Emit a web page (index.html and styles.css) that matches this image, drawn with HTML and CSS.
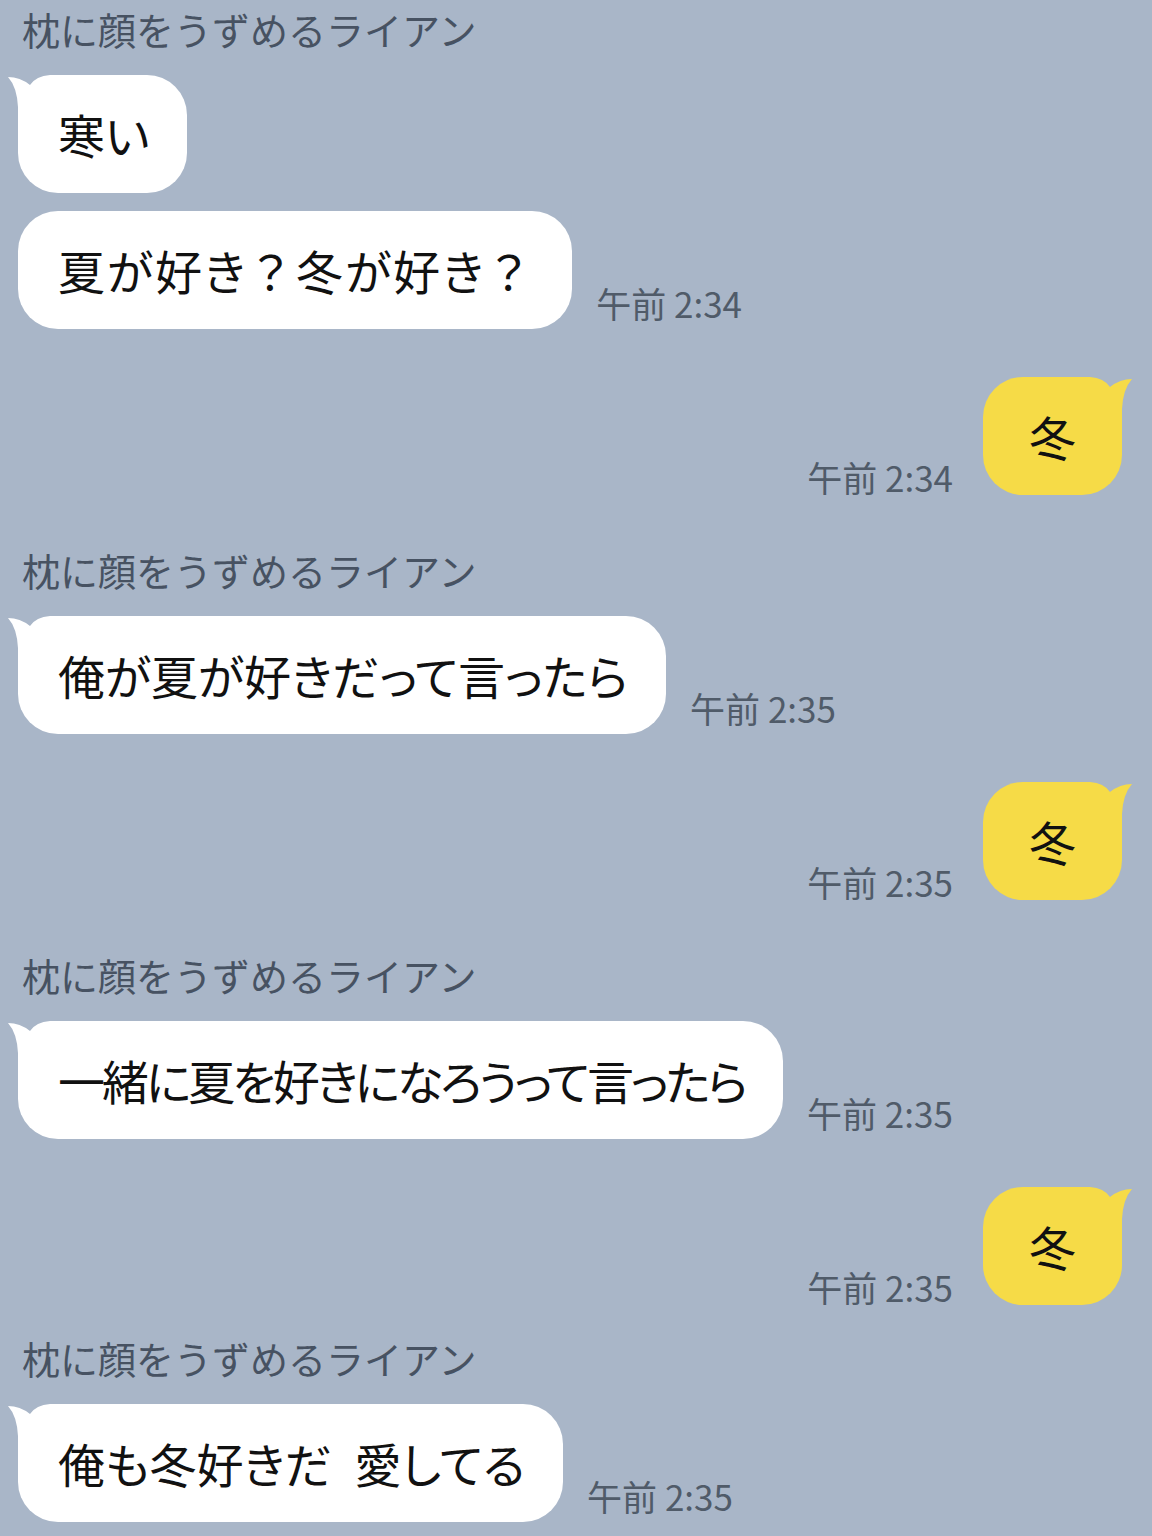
FILE: index.html
```html
<!DOCTYPE html>
<html lang="ja">
<head>
    <meta charset="UTF-8">
    <meta name="viewport" content="width=device-width, initial-scale=1.0">
    <title>トーク</title>
    <link rel="stylesheet" href="styles.css">
</head>
<body>

<div class="chat">
    <div class="name">枕に顔をうずめるライアン</div>
    <div class="row in">
        <div class="bubble white first">
            <svg class="tail" viewBox="0 0 52 52"><path d="M2,2 Q14,2 24,10 Q30,1 44,0 L52,0 L52,52 L12,52 L12,32 Q11,12 2,2 Z"/></svg>
            寒い
        </div>
    </div>
    <div class="row in next">
        <div class="bubble white loose">夏が好き<span class="full">？</span>冬が好き<span class="full">？</span></div>
        <div class="time">午前 2:34</div>
    </div>

    <div class="row out">
        <div class="time">午前 2:34</div>
        <div class="bubble yellow first">
            <svg class="tail" viewBox="0 0 52 52"><path d="M2,2 Q14,2 24,10 Q30,1 44,0 L52,0 L52,52 L12,52 L12,32 Q11,12 2,2 Z"/></svg>
            冬
        </div>
    </div>

    <div class="name">枕に顔をうずめるライアン</div>
    <div class="row in">
        <div class="bubble white first">
            <svg class="tail" viewBox="0 0 52 52"><path d="M2,2 Q14,2 24,10 Q30,1 44,0 L52,0 L52,52 L12,52 L12,32 Q11,12 2,2 Z"/></svg>
            俺が夏が好きだって言ったら
        </div>
        <div class="time">午前 2:35</div>
    </div>

    <div class="row out">
        <div class="time">午前 2:35</div>
        <div class="bubble yellow first">
            <svg class="tail" viewBox="0 0 52 52"><path d="M2,2 Q14,2 24,10 Q30,1 44,0 L52,0 L52,52 L12,52 L12,32 Q11,12 2,2 Z"/></svg>
            冬
        </div>
    </div>

    <div class="name">枕に顔をうずめるライアン</div>
    <div class="row in">
        <div class="bubble white first dense">
            <svg class="tail" viewBox="0 0 52 52"><path d="M2,2 Q14,2 24,10 Q30,1 44,0 L52,0 L52,52 L12,52 L12,32 Q11,12 2,2 Z"/></svg>
            一緒に夏を好きになろうって言ったら
        </div>
        <div class="time">午前 2:35</div>
    </div>

    <div class="row out">
        <div class="time">午前 2:35</div>
        <div class="bubble yellow first">
            <svg class="tail" viewBox="0 0 52 52"><path d="M2,2 Q14,2 24,10 Q30,1 44,0 L52,0 L52,52 L12,52 L12,32 Q11,12 2,2 Z"/></svg>
            冬
        </div>
    </div>

    <div class="name tight">枕に顔をうずめるライアン</div>
    <div class="row in">
        <div class="bubble white first">
            <svg class="tail" viewBox="0 0 52 52"><path d="M2,2 Q14,2 24,10 Q30,1 44,0 L52,0 L52,52 L12,52 L12,32 Q11,12 2,2 Z"/></svg>
            俺も冬好きだ 愛してる
        </div>
        <div class="time">午前 2:35</div>
    </div>
</div>

</body>
</html>
```

FILE: styles.css
```css
* {
    box-sizing: border-box;
    margin: 0;
    padding: 0;
}

body {
    font-family: "Noto Sans CJK JP", "Noto Sans", sans-serif;
    background-color: #a9b6c8;
    height: 1536px;
    overflow: hidden;
}

.chat {
    display: flex;
    flex-direction: column;
    padding: 4px 22px 0 18px;
}

.name {
    font-size: 38px;
    line-height: 50px;
    color: #475262;
    padding-left: 4px;
    margin-top: 50px;
    margin-bottom: 21px;
}

.name:first-child {
    margin-top: 0;
}

.name.tight {
    margin-top: 28px;
}

.row {
    display: flex;
    align-items: flex-end;
    gap: 24px;
}

.row.next {
    margin-top: 18px;
}

.row.out {
    justify-content: flex-end;
    gap: 30px;
    margin-top: 48px;
}

.bubble {
    position: relative;
    font-size: 47px;
    line-height: 58px;
    color: #111;
    padding: 30px 38px 30px 40px;
    border-radius: 40px;
    font-feature-settings: "palt";
    word-spacing: 0.25em;
    white-space: nowrap;
}

.bubble .full {
    font-feature-settings: normal;
}

.bubble.loose {
    letter-spacing: 2px;
}

.bubble.dense {
    letter-spacing: -3px;
}

.bubble.white {
    background-color: #fff;
    color: #111;
}

.bubble.yellow {
    background-color: #f6db47;
    padding: 30px 46px;
    margin-right: 8px;
}

/* little horn on the first bubble of a run */
.tail {
    position: absolute;
    top: 0;
    width: 52px;
    height: 52px;
}

.white .tail {
    left: -12px;
    fill: #fff;
}

.yellow .tail {
    right: -12px;
    fill: #f6db47;
    transform: scaleX(-1);
}

.time {
    font-size: 35px;
    line-height: 40px;
    color: #505b69;
    white-space: nowrap;
    margin-bottom: 6px;
}

.out .time {
    margin-bottom: -2px;
}
```
